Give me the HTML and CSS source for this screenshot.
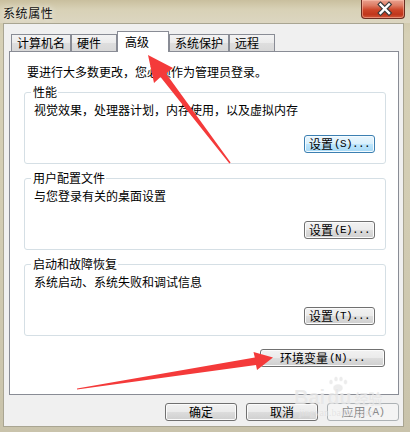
FILE: index.html
```html
<!DOCTYPE html>
<html lang="zh-CN">
<head>
<meta charset="utf-8">
<title>系统属性</title>
<link rel="stylesheet" href="styles.css">
</head>
<body>
<div class="window">
  <div class="titlebar">
    <span class="title">系统属性</span>
    <div class="close">
      <svg width="44" height="19" viewBox="0 0 44 19">
        <path d="M19.5 5.5 L28 14 M28 5.5 L19.5 14" stroke="#3b3b3b" stroke-width="4.6" stroke-linecap="square" fill="none"/>
        <path d="M19.5 5.5 L28 14 M28 5.5 L19.5 14" stroke="#ffffff" stroke-width="2.4" stroke-linecap="square" fill="none"/>
      </svg>
    </div>
  </div>
  <div class="client">
    <div class="tabs">
      <div class="tab">计算机名</div>
      <div class="tab">硬件</div>
      <div class="tab active">高级</div>
      <div class="tab">系统保护</div>
      <div class="tab">远程</div>
    </div>
    <div class="panel">
      <p class="intro">要进行大多数更改，您必须作为管理员登录。</p>
      <fieldset class="group">
        <legend>性能</legend>
        <p class="desc">视觉效果，处理器计划，内存使用，以及虚拟内存</p>
        <div class="btn-row"><button class="btn default">设置<span class="m">(S)...</span></button></div>
      </fieldset>
      <fieldset class="group">
        <legend>用户配置文件</legend>
        <p class="desc">与您登录有关的桌面设置</p>
        <div class="btn-row"><button class="btn">设置<span class="m">(E)...</span></button></div>
      </fieldset>
      <fieldset class="group">
        <legend>启动和故障恢复</legend>
        <p class="desc">系统启动、系统失败和调试信息</p>
        <div class="btn-row"><button class="btn">设置<span class="m">(T)...</span></button></div>
      </fieldset>
      <div class="env-row"><button class="btn env">环境变量<span class="m">(N)...</span></button></div>
    </div>
    <div class="footer">
      <button class="btn wide">确定</button>
      <button class="btn wide">取消</button>
      <button class="btn wide" disabled>应用<span class="m">(A)</span></button>
    </div>
  </div>
</div>
<svg class="arrows" width="410" height="432" viewBox="0 0 410 432">
  <polygon points="148,55 173,68 166,73.5 230.6,162.6 229.4,163.4 160.5,77 154,83" fill="#f43a3a"/>
  <polygon points="273,357.5 257,370 256,365 77,389.6 77,388.4 254.8,357.5 253.5,352" fill="#f43a3a"/>
  <g class="paw" fill="#dcdcdc" fill-opacity="0.55" stroke="#ffffff" stroke-opacity="0.6" stroke-width="0.8">
    <ellipse cx="338" cy="388" rx="5" ry="4"/>
    <ellipse cx="331" cy="382" rx="2" ry="2.6"/>
    <ellipse cx="336" cy="379" rx="2" ry="2.6"/>
    <ellipse cx="341" cy="379" rx="2" ry="2.6"/>
    <ellipse cx="345.5" cy="382" rx="2" ry="2.6"/>
  </g>
</svg>
<div class="watermark">
  <div class="wm-line"><span class="wm-big">Bai</span><span class="wm-big wm-du">du</span><span class="wm-cn">经验</span></div>
  <div class="wm-url">jingyan.baidu.com</div>
</div>
</body>
</html>
```

FILE: styles.css
```css
* { box-sizing: border-box; }

html, body {
  margin: 0;
  padding: 0;
}

body {
  width: 410px;
  height: 432px;
  overflow: hidden;
  position: relative;
  font-family: "Noto Sans CJK SC", "Liberation Sans", sans-serif;
  font-size: 12px;
  color: #000;
  background: #cdc6aa;
}

.window {
  width: 410px;
  height: 432px;
  display: flex;
  flex-direction: column;
  padding: 0 6px 5px 3px;
  background: linear-gradient(180deg, #cbc2a2 0%, #d6d0b6 8%, #d2ccb3 50%, #c9c3ab 100%);
}

.titlebar {
  height: 23px;
  margin: 0 -6px 0 -3px;
  padding: 0 5px 0 3px;
  display: flex;
  align-items: flex-start;
  justify-content: space-between;
  background: linear-gradient(180deg, #c9bf9e 0%, #d8d1b6 40%, #dcd6c1 100%);
}

.title {
  margin-top: 5px;
  line-height: 16px;
  font-size: 12px;
  letter-spacing: 0.6px;
  color: #111;
  text-shadow: 0 0 6px rgba(255, 255, 255, 0.9);
}

.close {
  width: 44px;
  height: 19px;
  border: 1px solid #6a2d22;
  border-top: none;
  border-radius: 0 0 4px 4px;
  background: linear-gradient(180deg, #e9a290 0%, #de7c64 30%, #cc4529 55%, #c0361c 80%, #d0583a 100%);
  box-shadow: inset 0 0 0 1px rgba(255, 200, 180, 0.5);
}

.close svg {
  display: block;
  margin: -1px 0 0 -1px;
}

.client {
  flex: 1;
  background: #f0f0f0;
  border: 1px solid #a9a592;
  padding: 7px 4px 0 5px;
  display: flex;
  flex-direction: column;
}

.tabs {
  display: flex;
  align-items: flex-end;
  height: 20px;
  margin-left: 2px;
  position: relative;
  z-index: 1;
}

.tab {
  height: 17px;
  min-width: 46px;
  padding: 0 5px;
  line-height: 16px;
  border: 1px solid #898c95;
  border-bottom: none;
  background: linear-gradient(180deg, #f3f3f3 0%, #ebebeb 50%, #dedede 52%, #d8d8d8 100%);
  white-space: nowrap;
}

.tab.active {
  height: 21px;
  min-width: 52px;
  padding: 0 7px;
  line-height: 20px;
  margin-bottom: -1px;
  background: #ffffff;
}

.panel {
  height: 344px;
  background: #ffffff;
  border: 1px solid #898c95;
  padding: 13px 12px 0 14px;
  display: flex;
  flex-direction: column;
}

.intro {
  margin: 0 0 6px 0;
  padding-left: 3px;
  line-height: 14px;
}

.group {
  margin: 0 0 7px 0;
  border: 1px solid #d5dfe5;
  border-radius: 3px;
  padding: 4px 10px 10px 9px;
  min-width: 0;
}

.group legend {
  padding: 0 1px 0 2px;
  margin-left: -3px;
  line-height: 14px;
}

.desc {
  margin: 0;
  line-height: 14px;
}

.btn-row {
  margin-top: 18px;
  display: flex;
  justify-content: flex-end;
}

.btn {
  font-family: "Noto Sans CJK SC", "Liberation Sans", sans-serif;
  font-size: 12px;
  color: #000;
  height: 18px;
  width: 71px;
  padding: 0;
  line-height: 16px;
  border: 1px solid #707070;
  border-radius: 3px;
  background: linear-gradient(180deg, #f2f2f2 0%, #ebebeb 48%, #dddddd 50%, #cfcfcf 100%);
  box-shadow: inset 0 0 0 1px #fbfbfb;
  white-space: nowrap;
  display: flex;
  align-items: center;
  justify-content: center;
}

.btn.default {
  border-color: #3c7fb1;
  background: linear-gradient(180deg, #eaf6fd 0%, #d9f0fc 48%, #bee6fd 50%, #a7d9f5 100%);
  box-shadow: inset 0 0 0 1px #f4fbff;
}

.btn.env {
  width: 125px;
}

.btn.wide {
  width: 72px;
}

.btn:disabled {
  color: #8a8a8a;
  border-color: #adb2b5;
  background: #f4f4f4;
  box-shadow: none;
}

.m {
  font-family: "Liberation Mono", "DejaVu Sans Mono", monospace;
  font-size: 11px;
  letter-spacing: -0.6px;
  margin-left: 1px;
}

.env-row {
  margin-top: 6px;
  margin-right: 1px;
  display: flex;
  justify-content: flex-end;
}

.footer {
  margin-top: 8px;
  display: flex;
  justify-content: flex-end;
  gap: 9px;
}

.arrows {
  position: absolute;
  top: 0;
  left: 0;
  pointer-events: none;
}

.watermark {
  position: absolute;
  left: 294px;
  top: 387px;
  width: 100px;
  color: rgba(215, 215, 215, 0.5);
  text-shadow: 0 0 1px rgba(255, 255, 255, 0.7);
  pointer-events: none;
  font-family: "Liberation Sans", sans-serif;
  line-height: 1;
}

.wm-line {
  display: flex;
  align-items: baseline;
  height: 20px;
}

.wm-big {
  font-size: 20px;
  font-weight: bold;
  letter-spacing: 0;
}

.wm-du {
  margin-left: 2px;
}

.wm-cn {
  font-family: "Noto Sans CJK SC", sans-serif;
  font-size: 14px;
  font-weight: bold;
  margin-left: 3px;
}

.wm-url {
  font-family: "Liberation Serif", serif;
  font-size: 10px;
  margin-top: 1px;
  margin-left: 5px;
  color: rgba(200, 200, 200, 0.45);
}
```
